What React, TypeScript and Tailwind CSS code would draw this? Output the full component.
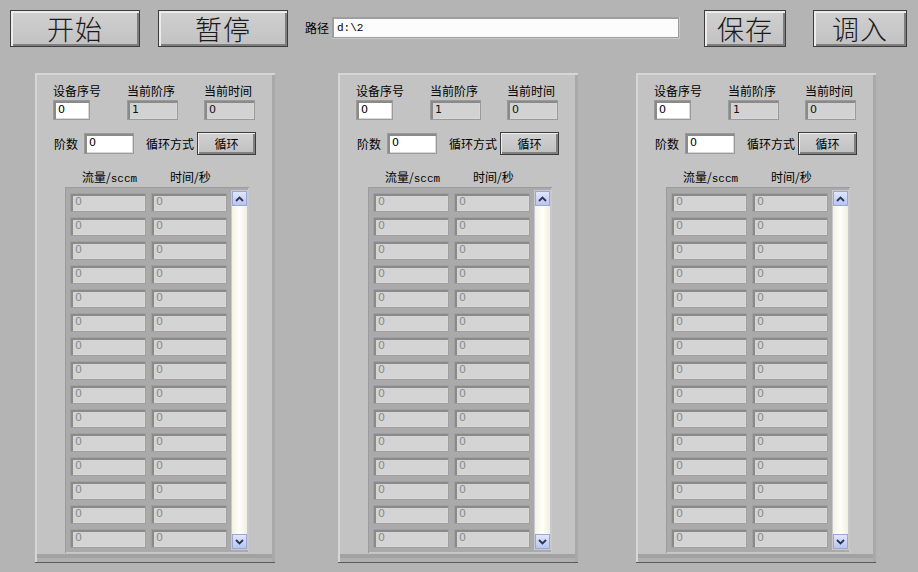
import React from "react";

const CJK = { fontFamily: '"Noto Sans CJK SC", "Liberation Sans", sans-serif' };
const MONO = { fontFamily: '"Liberation Mono", "DejaVu Sans Mono", monospace' };

function BigButton({ label, className }: { label: string; className: string }) {
  return (
    <div
      className={`h-[37px] flex items-center justify-center border border-[#3c3c3c] bg-gradient-to-b from-[#d0d0d0] to-[#c2c2c2] shadow-[inset_2px_2px_0_#ececec,inset_-2px_-2px_0_#7e7e7e] text-[27px] leading-none text-[#1a1a1a] ${className}`}
      style={{ ...CJK, fontWeight: 300 }}
    >
      <span className="tracking-[1px]">{label}</span>
    </div>
  );
}

function Field({ value, className, white }: { value: string; className: string; white?: boolean }) {
  return (
    <div
      className={`flex items-center border border-[#9a9a9a] shadow-[inset_2px_2px_0_#8a8a8a,inset_-1px_-1px_0_#d8d8d8] pl-[4px] text-[11px] ${white ? "bg-white text-black" : "bg-[#d2d2d2] text-[#111]"} ${className}`}
      style={{ fontFamily: '"DejaVu Sans", "Liberation Sans", sans-serif' }}
    >
      {value}
    </div>
  );
}

function Panel({ className }: { className: string }) {
  const rows = Array.from({ length: 15 });
  return (
    <div
      className={`w-[240px] h-[490px] bg-[#c3c3c3] flex flex-col shadow-[inset_2px_2px_0_#d6d6d6,inset_-3px_0_0_#a9a9a9,inset_0_-4px_0_#b0b0b0,inset_0_-8px_0_#a2a2a2] border-b border-[#5a5a5a] ${className}`}
    >
      {/* label row */}
      <div className="flex mt-[10px] text-[12px] leading-[16px] text-black" style={CJK}>
        <div className="ml-[18px] w-[74px]">设备序号</div>
        <div className="w-[77px]">当前阶序</div>
        <div>当前时间</div>
      </div>
      <div className="flex mt-[1px]">
        <Field value="0" white className="ml-[18px] w-[37px] h-[20px]" />
        <Field value="1" className="ml-[37px] w-[51px] h-[20px]" />
        <Field value="0" className="ml-[26px] w-[51px] h-[20px]" />
      </div>
      <div className="flex items-center mt-[12px] text-[12px] text-black" style={CJK}>
        <div className="ml-[19px] w-[30px]">阶数</div>
        <Field value="0" white className="w-[50px] h-[21px]" />
        <div className="ml-[12px] w-[51px]">循环方式</div>
        <div className="w-[59px] h-[23px] flex items-center justify-center border border-[#3c3c3c] bg-gradient-to-b from-[#d2d2d2] to-[#c0c0c0] shadow-[inset_1px_1px_0_#efefef,inset_-2px_-2px_0_#808080]">
          循环
        </div>
      </div>
      <div className="flex mt-[15px] text-[12px] leading-[14px] text-black" style={CJK}>
        <div className="ml-[47px] w-[88px]">
          流量/<span style={MONO} className="text-[11px]">sccm</span>
        </div>
        <div>时间/秒</div>
      </div>
      <div className="ml-[30px] mt-[1px] w-[184px] h-[366px] bg-[#aaaaaa] flex shadow-[inset_1px_1px_0_#9c9c9c,inset_-1px_-1px_0_#c9c9c9]">
        <div className="flex flex-col gap-[5px] pt-[6px] pl-[5px]">
          {rows.map((_, i) => (
            <div key={i} className="flex gap-[5px]">
              <Field value="0" className="w-[76px] h-[19px] !text-[#8a8a8a] !bg-[#d4d4d4] border-[#a0a0a0]" />
              <Field value="0" className="w-[76px] h-[19px] !text-[#8a8a8a] !bg-[#d4d4d4] border-[#a0a0a0]" />
            </div>
          ))}
        </div>
        <div className="ml-[4px] mt-[3px] w-[17px] h-[360px] flex flex-col justify-between bg-gradient-to-r from-[#f4f2e6] via-[#fffffa] to-[#f1efe3] border border-[#c9c9c9]">
          <div className="w-[15px] h-[15px] bg-gradient-to-b from-[#dfe6ff] to-[#b9c5ef] border border-[#9aa7d6] flex items-center justify-center">
            <svg width="9" height="6" viewBox="0 0 9 6">
              <path d="M1 5 L4.5 1.5 L8 5" stroke="#2b3550" strokeWidth="1.8" fill="none" />
            </svg>
          </div>
          <div className="w-[15px] h-[15px] bg-gradient-to-b from-[#dfe6ff] to-[#b9c5ef] border border-[#9aa7d6] flex items-center justify-center">
            <svg width="9" height="6" viewBox="0 0 9 6">
              <path d="M1 1 L4.5 4.5 L8 1" stroke="#2b3550" strokeWidth="1.8" fill="none" />
            </svg>
          </div>
        </div>
      </div>
    </div>
  );
}

export default function App() {
  return (
    <div className="w-[918px] h-[572px] bg-[#b4b4b4] overflow-hidden flex flex-col">
      <div className="flex items-start pt-[10px] pl-[10px]">
        <BigButton label="开始" className="w-[130px]" />
        <BigButton label="暂停" className="ml-[18px] w-[130px]" />
        <div className="ml-[17px] mt-[6px] flex items-center h-[24px]">
          <span className="text-[12px] text-black mr-[3px]" style={CJK}>
            路径
          </span>
          <div className="w-[348px] h-[22px] bg-[#9e9e9e] p-[2px] shadow-[inset_-1px_-1px_0_#c8c8c8]">
            <div className="w-full h-full bg-[#fcfcfc] flex items-center pl-[3px] text-[11px] text-black" style={MONO}>
              d:\2
            </div>
          </div>
        </div>
        <BigButton label="保存" className="ml-[24px] w-[82px]" />
        <BigButton label="调入" className="ml-[27px] w-[94px]" />
      </div>
      <div className="flex mt-[26px]">
        <Panel className="ml-[35px]" />
        <Panel className="ml-[63px]" />
        <Panel className="ml-[58px]" />
      </div>
    </div>
  );
}
